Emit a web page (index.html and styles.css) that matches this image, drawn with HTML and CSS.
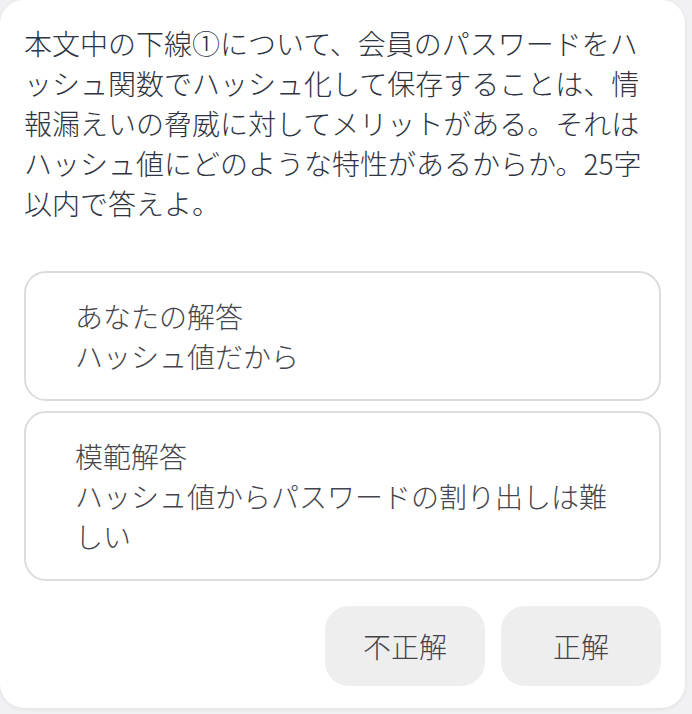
FILE: index.html
```html
<!DOCTYPE html>
<html lang="ja">
<head>
<meta charset="utf-8">
<link rel="stylesheet" href="styles.css">
</head>
<body>
<div class="card">
  <p class="question">本文中の下線①について、会員のパスワードをハッシュ関数でハッシュ化して保存することは、情報漏えいの脅威に対してメリットがある。それはハッシュ値にどのような特性があるからか。25字以内で答えよ。</p>
  <div class="answers">
    <div class="answer">
      <div class="label">あなたの解答</div>
      <div class="text">ハッシュ値だから</div>
    </div>
    <div class="answer">
      <div class="label">模範解答</div>
      <div class="text">ハッシュ値からパスワードの割り出しは難しい</div>
    </div>
  </div>
  <div class="actions">
    <button class="btn">不正解</button>
    <button class="btn">正解</button>
  </div>
</div>
</body>
</html>
```

FILE: styles.css
```css
html, body {
  margin: 0;
  padding: 0;
  background: #f1f1f3;
}
body {
  width: 692px;
  height: 714px;
  overflow: hidden;
  font-family: "Noto Sans CJK JP", "Noto Sans", sans-serif;
  font-weight: 300;
}
.card {
  box-sizing: border-box;
  width: 685px;
  height: 708px;
  background: #ffffff;
  border-radius: 24px;
  box-shadow: 0 1px 4px rgba(0, 0, 0, 0.08);
  padding: 23px 24px 22px 24px;
  display: flex;
  flex-direction: column;
}
.question {
  margin: 0;
  font-size: 28px;
  line-height: 40px;
  color: #2e3441;
  line-break: normal;
}
.answers {
  margin-top: 48px;
  display: flex;
  flex-direction: column;
  gap: 10px;
}
.answer {
  border: 2px solid #dcdcdf;
  border-radius: 22px;
  padding: 23px 49px;
  font-size: 28px;
  line-height: 40px;
  color: #45454d;
}
.actions {
  margin-top: 25px;
  display: flex;
  justify-content: flex-end;
  gap: 16px;
}
.btn {
  width: 160px;
  height: 80px;
  border: none;
  border-radius: 24px;
  background: #eeeeef;
  color: #444448;
  font-family: "Noto Sans CJK JP", sans-serif;
  font-weight: 300;
  font-size: 28px;
  padding: 0;
}
```
